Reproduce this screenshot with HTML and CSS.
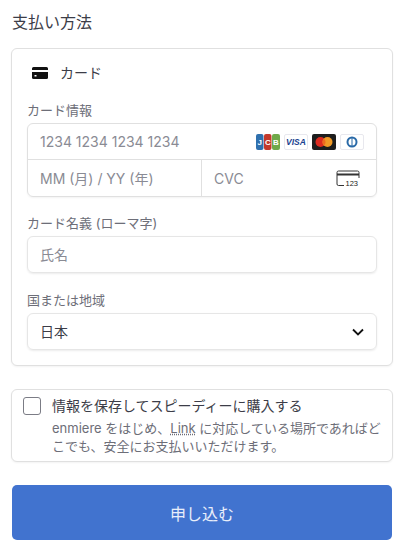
FILE: index.html
```html
<!DOCTYPE html>
<html lang="ja">
<head>
  <meta charset="UTF-8" />
  <meta name="viewport" content="width=device-width, initial-scale=1.0"/>
  <title>支払い方法</title>
  <link rel="stylesheet" href="styles.css">
</head>
<body>
  <h2 class="page-title">支払い方法</h2>

  <div class="panel method">
    <div class="method-head">
      <svg class="card-icon" width="16" height="12" viewBox="0 0 16 12">
        <path d="M1.500 0h13A1.500 1.500 0 0 1 16 1.500V3H0V1.500A1.500 1.500 0 0 1 1.500 0z" fill="#111"/>
        <path d="M0 5h16v5.500a1.500 1.500 0 0 1-1.500 1.500h-13A1.500 1.500 0 0 1 0 10.500z" fill="#111"/>
        <rect x="2.500" y="8" width="2" height="1.500" fill="#fff"/>
      </svg>
      <span>カード</span>
    </div>

    <label class="field-label">カード情報</label>
    <div class="card-box">
      <div class="card-row">
        <span class="placeholder">1234 1234 1234 1234</span>
        <div class="brands">
          <svg width="24" height="16" viewBox="0 0 24 16">
            <rect x="0" y="0" width="7.500" height="16" rx="2" fill="#2f70ae"/>
            <rect x="8" y="0" width="7.500" height="16" rx="2" fill="#c3392b"/>
            <rect x="16" y="0" width="8" height="16" rx="2" fill="#6fa84a"/>
            <text x="3.800" y="11" class="jcb">J</text>
            <text x="11.800" y="11" class="jcb">C</text>
            <text x="20" y="11" class="jcb">B</text>
          </svg>
          <svg width="24" height="16" viewBox="0 0 24 16">
            <rect x="0.500" y="0.500" width="23" height="15" rx="1.500" fill="#fff" stroke="#e8e8ee"/>
            <text x="12" y="11.200" class="visa">VISA</text>
          </svg>
          <svg width="24" height="16" viewBox="0 0 24 16">
            <rect width="24" height="16" rx="2" fill="#1d1d1d"/>
            <circle cx="8.500" cy="8" r="5" fill="#dc2a1f"/>
            <circle cx="15.500" cy="8" r="5" fill="#f09a26"/>
            <path d="M12 4.400a5 5 0 0 1 0 7.200 5 5 0 0 1 0-7.200z" fill="#ee6a1f"/>
          </svg>
          <svg width="24" height="16" viewBox="0 0 24 16">
            <rect x="0.500" y="0.500" width="23" height="15" rx="1.500" fill="#fff" stroke="#e8e8ee"/>
            <circle cx="12" cy="8" r="5.500" fill="#2a6aa8"/>
            <circle cx="12" cy="8" r="3.500" fill="#fff"/>
            <rect x="11.500" y="3.500" width="1" height="9" fill="#2a6aa8"/>
          </svg>
        </div>
      </div>
      <div class="card-row split">
        <div class="expiry"><span class="placeholder">MM (月) / YY (年)</span></div>
        <div class="cvc">
          <span class="placeholder">CVC</span>
          <svg width="24" height="17" viewBox="0 0 24 17">
            <path d="M8 15.500H2.500A1.500 1.500 0 0 1 1 14V2.500A1.500 1.500 0 0 1 2.500 1h19A1.500 1.500 0 0 1 23 2.500V8" fill="none" stroke="#333" stroke-width="1"/>
            <rect x="1" y="3.500" width="22" height="2" fill="#333"/>
            <text x="9.500" y="16" class="cvc-num">123</text>
          </svg>
        </div>
      </div>
    </div>

    <label class="field-label second">カード名義 (ローマ字)</label>
    <div class="input"><span class="placeholder">氏名</span></div>

    <label class="field-label country">国または地域</label>
    <div class="input select">
      <span>日本</span>
      <svg width="12" height="8" viewBox="0 0 12 8">
        <path d="M1 1.500l5 5 5-5" fill="none" stroke="#111" stroke-width="1.800"/>
      </svg>
    </div>
  </div>

  <div class="panel save">
    <span class="checkbox"></span>
    <div class="save-text">
      <div class="save-title">情報を保存してスピーディーに購入する</div>
      <p class="save-note">enmiere をはじめ、<span class="link">Link</span> に対応している場所であればどこでも、安全にお支払いいただけます。</p>
    </div>
  </div>

  <button class="submit">申し込む</button>
</body>
</html>
```

FILE: styles.css
```css
body {
  font-family: Inter, "Noto Sans CJK JP", sans-serif;
  margin: 0;
  padding: 12px 12px 0;
  background-color: #fff;
  color: #3c3d48;
}
.page-title {
  margin: 0 0 15px;
  font-size: 16px;
  line-height: 21px;
  font-weight: 400;
}
.panel {
  background-color: #fff;
  border: 1px solid #e0e0e0;
  border-radius: 6px;
  box-shadow: 0 1px 2px rgba(0, 0, 0, 0.05);
  margin-left: -1px;
  margin-right: -1px;
}
.method {
  padding: 14px 15px 15px;
  margin-bottom: 23px;
}
.method-head {
  display: flex;
  align-items: center;
  gap: 12px;
  padding-left: 5px;
  font-size: 14px;
  line-height: 20px;
  margin-bottom: 18px;
}
.field-label {
  display: block;
  font-size: 13px;
  line-height: 18px;
  color: #6d6e78;
  margin-bottom: 4px;
}
.field-label.second {
  margin-top: 17px;
}
.field-label.country {
  margin-top: 18px;
}
.card-box {
  border: 1px solid #e0e0e0;
  border-radius: 6px;
  box-shadow: 0 1px 2px rgba(0, 0, 0, 0.05);
}
.card-row {
  display: flex;
  align-items: center;
  justify-content: space-between;
  height: 35px;
  padding: 0 12px;
}
.card-row.split {
  padding: 0;
  border-top: 1px solid #e0e0e0;
  height: 36px;
}
.expiry, .cvc {
  height: 100%;
  display: flex;
  align-items: center;
  padding: 0 12px;
}
.expiry {
  flex: none;
  width: 149px;
  border-right: 1px solid #e0e0e0;
}
.cvc {
  flex: 1;
  justify-content: space-between;
  padding-right: 16px;
}
.placeholder {
  font-size: 14px;
  color: #8a8b94;
}
.brands {
  display: flex;
  gap: 4px;
}
.jcb {
  font: bold 8px "Liberation Sans", sans-serif;
  fill: #fff;
  text-anchor: middle;
}
.visa {
  font: italic bold 8.500px "Liberation Sans", sans-serif;
  fill: #1a3f8f;
  text-anchor: middle;
}
.cvc-num {
  font: 7.500px "Liberation Sans", sans-serif;
  fill: #222;
}
.input {
  display: flex;
  align-items: center;
  justify-content: space-between;
  height: 35px;
  padding: 0 12px;
  font-size: 14px;
  border: 1px solid #e6e6e6;
  border-radius: 6px;
  box-shadow: 0 1px 2px rgba(0, 0, 0, 0.08);
}
.input span {
  margin-top: -2px;
}
.save {
  display: flex;
  gap: 11px;
  padding: 7px 11px 6px;
  margin-bottom: 23px;
}
.checkbox {
  flex: none;
  width: 16px;
  height: 16px;
  border: 1px solid #7b7c85;
  border-radius: 3px;
}
.save-title {
  font-size: 14px;
  line-height: 18px;
  margin-bottom: 4px;
}
.save-note {
  margin: 0;
  font-size: 13px;
  line-height: 18px;
  color: #6d6e78;
}
.link {
  text-decoration: underline dotted;
}
.submit {
  display: block;
  width: 100%;
  height: 55px;
  border: none;
  border-radius: 5px;
  background-color: #4173cf;
  color: #e8eefa;
  font-family: inherit;
  font-size: 16px;
}
```
